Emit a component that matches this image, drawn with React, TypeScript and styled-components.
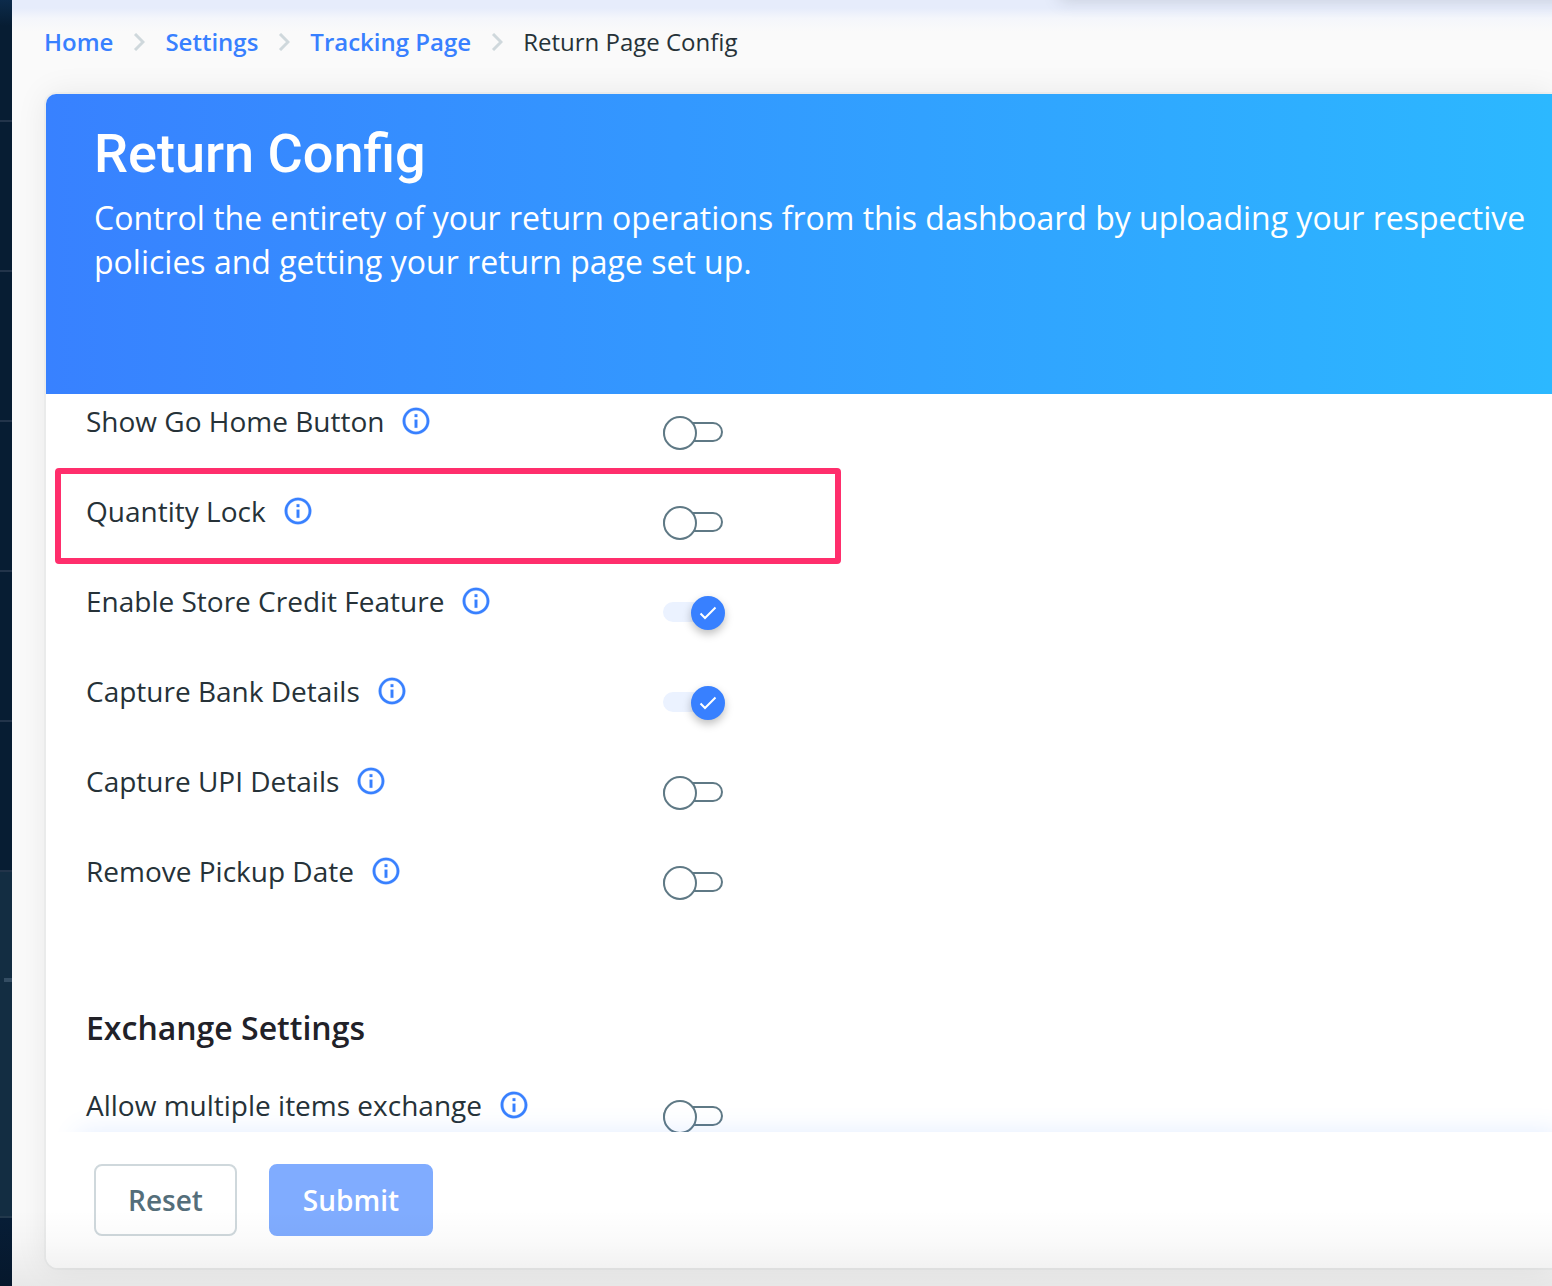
import React from "react";
import styled, { createGlobalStyle } from "styled-components";

const GlobalStyle = createGlobalStyle`
  *, *::before, *::after { box-sizing: border-box; }
  body {
    margin: 0;
    background: #fafafa;
    color: #263238;
    font-family: "Open Sans", "Noto Sans", sans-serif;
  }
`;

const Shell = styled.div`
  display: grid;
  grid-template-columns: 12px minmax(0, 1fr);
  height: 100vh;
  overflow: hidden;
`;

const Sidebar = styled.nav`
  display: flex;
  flex-direction: column;
  background: linear-gradient(#0c2b4b, #071d33 26px);
`;

const SideItem = styled.div<{ $first?: boolean }>`
  flex: none;
  height: ${(p) => (p.$first ? 122 : 150)}px;
  border-bottom: 2px solid #22344a;
`;

const SideActive = styled.div`
  flex: none;
  display: flex;
  justify-content: flex-end;
  height: 346px;
  padding-top: 106px;
  background: #132d42;
  border-bottom: 2px solid #22384c;
`;

const SideMark = styled.span`
  width: 8px;
  height: 4px;
  background: #344d63;
`;

const SideRest = styled.div`
  flex: 1;
  background: linear-gradient(#071d36, #06182c);
`;

const Main = styled.main`
  position: relative;
  display: flex;
  flex-direction: column;
  height: 100vh;
  padding: 0 0 18px 32px;
  background: linear-gradient(#e6ecfb 8px, #f4f6fb 18px, #fafafa 32px);
`;

const TopShadow = styled.div`
  position: absolute;
  top: -20px;
  left: 1048px;
  right: -20px;
  height: 20px;
  box-shadow: 0 0 16px rgba(120, 130, 140, 0.3);
`;

const Crumbs = styled.nav`
  display: flex;
  align-items: center;
  gap: 20px;
  height: 94px;
  flex: none;
  padding-bottom: 10px;
  font-size: 24px;
  line-height: 32px;
`;

const CrumbLink = styled.a`
  color: #3880ff;
  font-weight: 600;
  text-decoration: none;
`;

const Chevron = styled.svg`
  width: 12px;
  height: 18px;
  fill: none;
  stroke: #cfd8dc;
  stroke-width: 3;
`;

const Card = styled.section`
  flex: 1;
  min-height: 0;
  display: flex;
  flex-direction: column;
  margin-left: 2px;
  background: #fff;
  border-radius: 10px 0 0 12px;
  box-shadow: 0 0 0 2px rgba(38, 50, 56, 0.03), 0 0 32px rgba(0, 0, 0, 0.08);
`;

const Banner = styled.header`
  flex: none;
  height: 300px;
  padding: 30px 24px 0 48px;
  color: #fff;
  background: linear-gradient(90deg, #3881ff, #2cb8ff);
  border-top-left-radius: 10px;
`;

const Title = styled.h1`
  margin: 0;
  font-family: Roboto, "Open Sans", sans-serif;
  font-size: 54px;
  font-weight: 500;
  line-height: 60px;
`;

const Lead = styled.p`
  margin: 12px 0 0;
  font-size: 32px;
  line-height: 44px;
`;

const Body = styled.div`
  flex: 1;
  min-height: 0;
  overflow: hidden;
  padding: 0 40px;
`;

const Row = styled.div<{ $marked?: boolean }>`
  position: relative;
  display: grid;
  grid-template-columns: 577px auto;
  justify-content: start;
  align-items: start;
  height: 90px;

  &::after {
    content: "";
    display: ${(p) => (p.$marked ? "block" : "none")};
    position: absolute;
    top: -16px;
    left: -31px;
    width: 786px;
    height: 96px;
    border: 6px solid #ff2e6c;
    border-radius: 4px;
    pointer-events: none;
  }
`;

const LabelCell = styled.div`
  display: flex;
  align-items: center;
  gap: 16px;
  padding-top: 7px;
  font-size: 28px;
  line-height: 40px;
`;

const InfoButton = styled.button`
  display: flex;
  padding: 0;
  border: 0;
  background: none;
`;

const InfoSvg = styled.svg`
  width: 32px;
  height: 32px;
  fill: #3880ff;
  stroke: #3880ff;
  stroke-width: 0.2;
`;

const Toggle = styled.span`
  position: relative;
  display: flex;
  align-items: center;
  width: 62px;
  height: 34px;
  margin-top: 22px;
`;

const ToggleInput = styled.input`
  appearance: none;
  width: 60px;
  height: 20px;
  margin: 0 0 2px;
  border: 2px solid #5f7985;
  border-radius: 10px;

  &:checked {
    border-color: #ebf2ff;
    background: #ebf2ff;
  }
`;

const Knob = styled.span<{ $on: boolean }>`
  position: absolute;
  top: 0;
  left: ${(p) => (p.$on ? 28 : 0)}px;
  display: flex;
  align-items: center;
  justify-content: center;
  width: 34px;
  height: 34px;
  border: 2px solid ${(p) => (p.$on ? "#3880ff" : "#5f7985")};
  border-radius: 50%;
  background: ${(p) => (p.$on ? "#3880ff" : "#fff")};
  box-shadow: ${(p) => (p.$on ? "0 4px 8px rgba(0, 0, 0, 0.25)" : "none")};
  pointer-events: none;
`;

const Check = styled.svg`
  width: 18px;
  height: 14px;
  fill: none;
  stroke: #fff;
  stroke-width: 2;
`;

const SectionTitle = styled.h2`
  margin: 72px 0 28px;
  color: #212128;
  font-size: 32px;
  font-weight: 600;
  line-height: 44px;
`;

const Footer = styled.footer`
  position: relative;
  flex: none;
  display: flex;
  gap: 32px;
  padding: 32px 48px;
  background: #fff;
  border-bottom-left-radius: 12px;
  box-shadow: 20px -12px 24px -12px rgba(56, 128, 255, 0.14);
`;

const Button = styled.button<{ $primary?: boolean }>`
  height: 72px;
  padding: 0 32px;
  border: 2px solid ${(p) => (p.$primary ? "#80acff" : "#cfd8dc")};
  border-radius: 8px;
  background: ${(p) => (p.$primary ? "#80acff" : "#fff")};
  color: ${(p) => (p.$primary ? "#fff" : "#546e7a")};
  font-family: inherit;
  font-size: 28px;
  font-weight: 600;
`;

const BottomShade = styled.div`
  position: absolute;
  left: 0;
  right: 0;
  bottom: 0;
  height: 76px;
  background: linear-gradient(transparent, rgba(0, 0, 0, 0.02) 40%, rgba(0, 0, 0, 0.07));
  pointer-events: none;
`;

function Separator() {
  return (
    <Chevron viewBox="0 0 12 18" aria-hidden="true">
      <path d="M2 1L10 9L2 17" />
    </Chevron>
  );
}

type SettingProps = { id: string; label: string; on?: boolean; marked?: boolean };

function Setting({ id, label, on = false, marked }: SettingProps) {
  const [checked, setChecked] = React.useState(on);
  return (
    <Row $marked={marked}>
      <LabelCell>
        <label htmlFor={id}>{label}</label>
        <InfoButton type="button" aria-label={`About ${label}`}>
          <InfoSvg viewBox="0 0 24 24">
            <path d="M11 7h2v2h-2zm0 4h2v6h-2zm1-9C6.480 2 2 6.480 2 12s4.480 10 10 10 10-4.480 10-10S17.520 2 12 2zm0 18c-4.410 0-8-3.590-8-8s3.590-8 8-8 8 3.590 8 8-3.590 8-8 8z" />
          </InfoSvg>
        </InfoButton>
      </LabelCell>
      <Toggle>
        <ToggleInput
          id={id}
          type="checkbox"
          role="switch"
          checked={checked}
          onChange={(e) => setChecked(e.target.checked)}
        />
        <Knob $on={checked}>
          {checked && (
            <Check viewBox="0 0 18 14">
              <path d="M1.500 7.500L6 12L16.500 1.500" />
            </Check>
          )}
        </Knob>
      </Toggle>
    </Row>
  );
}

const returnSettings: SettingProps[] = [
  { id: "go-home", label: "Show Go Home Button" },
  { id: "quantity-lock", label: "Quantity Lock", marked: true },
  { id: "store-credit", label: "Enable Store Credit Feature", on: true },
  { id: "bank-details", label: "Capture Bank Details", on: true },
  { id: "upi-details", label: "Capture UPI Details" },
  { id: "pickup-date", label: "Remove Pickup Date" },
];

export default function App() {
  return (
    <>
      <GlobalStyle />
      <Shell>
        <Sidebar aria-label="Main menu">
          <SideItem $first />
          <SideItem />
          <SideItem />
          <SideItem />
          <SideItem />
          <SideItem />
          <SideActive>
            <SideMark />
          </SideActive>
          <SideRest />
        </Sidebar>
        <Main>
          <TopShadow />
          <Crumbs aria-label="Breadcrumb">
            <CrumbLink href="#home">Home</CrumbLink>
            <Separator />
            <CrumbLink href="#settings">Settings</CrumbLink>
            <Separator />
            <CrumbLink href="#tracking">Tracking Page</CrumbLink>
            <Separator />
            <span aria-current="page">Return Page Config</span>
          </Crumbs>
          <Card>
            <Banner>
              <Title>Return Config</Title>
              <Lead>
                Control the entirety of your return operations from this dashboard by uploading your respective
                policies and getting your return page set up.
              </Lead>
            </Banner>
            <Body>
              {returnSettings.map((s) => (
                <Setting key={s.id} {...s} />
              ))}
              <SectionTitle>Exchange Settings</SectionTitle>
              <Setting id="multi-exchange" label="Allow multiple items exchange" />
            </Body>
            <Footer>
              <Button type="reset">Reset</Button>
              <Button type="submit" $primary>
                Submit
              </Button>
            </Footer>
          </Card>
          <BottomShade />
        </Main>
      </Shell>
    </>
  );
}
